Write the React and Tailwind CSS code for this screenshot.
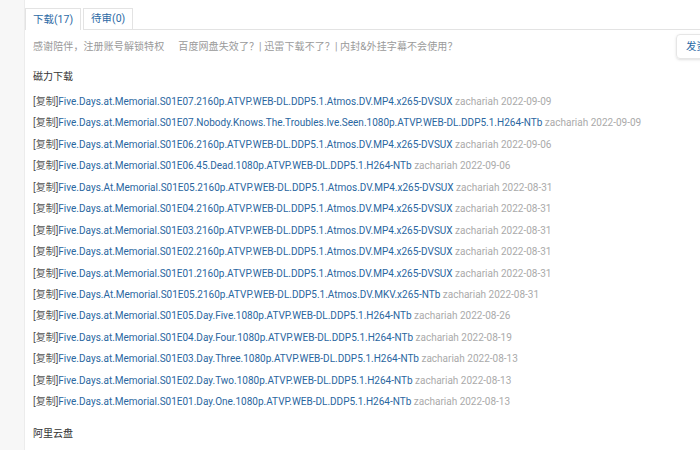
import React from 'react';

const ROWS = [
  ['Five.Days.at.Memorial.S01E07.2160p.ATVP.WEB-DL.DDP5.1.Atmos.DV.MP4.x265-DVSUX', '2022-09-09'],
  ['Five.Days.at.Memorial.S01E07.Nobody.Knows.The.Troubles.Ive.Seen.1080p.ATVP.WEB-DL.DDP5.1.H264-NTb', '2022-09-09'],
  ['Five.Days.at.Memorial.S01E06.2160p.ATVP.WEB-DL.DDP5.1.Atmos.DV.MP4.x265-DVSUX', '2022-09-06'],
  ['Five.Days.at.Memorial.S01E06.45.Dead.1080p.ATVP.WEB-DL.DDP5.1.H264-NTb', '2022-09-06'],
  ['Five.Days.At.Memorial.S01E05.2160p.ATVP.WEB-DL.DDP5.1.Atmos.DV.MP4.x265-DVSUX', '2022-08-31'],
  ['Five.Days.at.Memorial.S01E04.2160p.ATVP.WEB-DL.DDP5.1.Atmos.DV.MP4.x265-DVSUX', '2022-08-31'],
  ['Five.Days.at.Memorial.S01E03.2160p.ATVP.WEB-DL.DDP5.1.Atmos.DV.MP4.x265-DVSUX', '2022-08-31'],
  ['Five.Days.at.Memorial.S01E02.2160p.ATVP.WEB-DL.DDP5.1.Atmos.DV.MP4.x265-DVSUX', '2022-08-31'],
  ['Five.Days.at.Memorial.S01E01.2160p.ATVP.WEB-DL.DDP5.1.Atmos.DV.MP4.x265-DVSUX', '2022-08-31'],
  ['Five.Days.At.Memorial.S01E05.2160p.ATVP.WEB-DL.DDP5.1.Atmos.DV.MKV.x265-NTb', '2022-08-31'],
  ['Five.Days.at.Memorial.S01E05.Day.Five.1080p.ATVP.WEB-DL.DDP5.1.H264-NTb', '2022-08-26'],
  ['Five.Days.at.Memorial.S01E04.Day.Four.1080p.ATVP.WEB-DL.DDP5.1.H264-NTb', '2022-08-19'],
  ['Five.Days.at.Memorial.S01E03.Day.Three.1080p.ATVP.WEB-DL.DDP5.1.H264-NTb', '2022-08-13'],
  ['Five.Days.at.Memorial.S01E02.Day.Two.1080p.ATVP.WEB-DL.DDP5.1.H264-NTb', '2022-08-13'],
  ['Five.Days.at.Memorial.S01E01.Day.One.1080p.ATVP.WEB-DL.DDP5.1.H264-NTb', '2022-08-13'],
];

export default function App() {
  return (
    <div
      className="w-[700px] h-[450px] overflow-hidden bg-[#f7f7f7] flex"
      style={{ fontFamily: 'Roboto, "Noto Sans CJK SC", sans-serif' }}
    >
      <div className="ml-6 w-[700px] shrink-0 bg-white border-l border-[#ececec] pt-2">
        {/* Tabs */}
        <div className="flex items-end text-[10.5px]">
          <div className="h-[22px] px-[7px] flex items-center border border-b-0 border-[#e3e3e3] text-[#2c6aa5] bg-white">
            下载(17)
          </div>
          <div className="h-[22px] px-[7px] ml-[2px] flex items-center border border-[#e3e3e3] text-[#2c6aa5]">
            待审(0)
          </div>
          <div className="flex-1 border-b border-[#e3e3e3]" />
        </div>

        {/* Notice */}
        <div className="flex items-center justify-between pl-2 mt-[4px] h-[25px]">
          <div className="text-[10px] text-[#9a9a9a] tracking-[0.1px]">
            <span>感谢陪伴，注册账号解锁特权</span>
            <span className="ml-[14px]">百度网盘失效了？| 迅雷下载不了？| 内封&amp;外挂字幕不会使用？</span>
          </div>
          <div className="w-[48px] h-[25px] shrink-0 border border-[#e6e6e6] rounded-sm flex items-center pl-[9px] text-[10.5px] text-[#2c6aa5] whitespace-nowrap overflow-hidden shadow-sm">
            发资源
          </div>
        </div>

        <div className="pl-2 mt-[10px] text-[10px] text-[#333] leading-[16px]">磁力下载</div>

        <div className="pl-2 mt-[6px] text-[10px]">
          {ROWS.map(([name, date], i) => (
            <div key={i} className="h-[21.45px] leading-[21.45px] whitespace-nowrap">
              <span className="text-[#555]">[复制]</span>
              <span className="text-[#2a66a0]">{name}</span>
              <span className="text-[#aaa]"> zachariah {date}</span>
            </div>
          ))}
        </div>

        <div className="pl-2 mt-[13px] text-[10px] text-[#333]">阿里云盘</div>
      </div>
    </div>
  );
}
